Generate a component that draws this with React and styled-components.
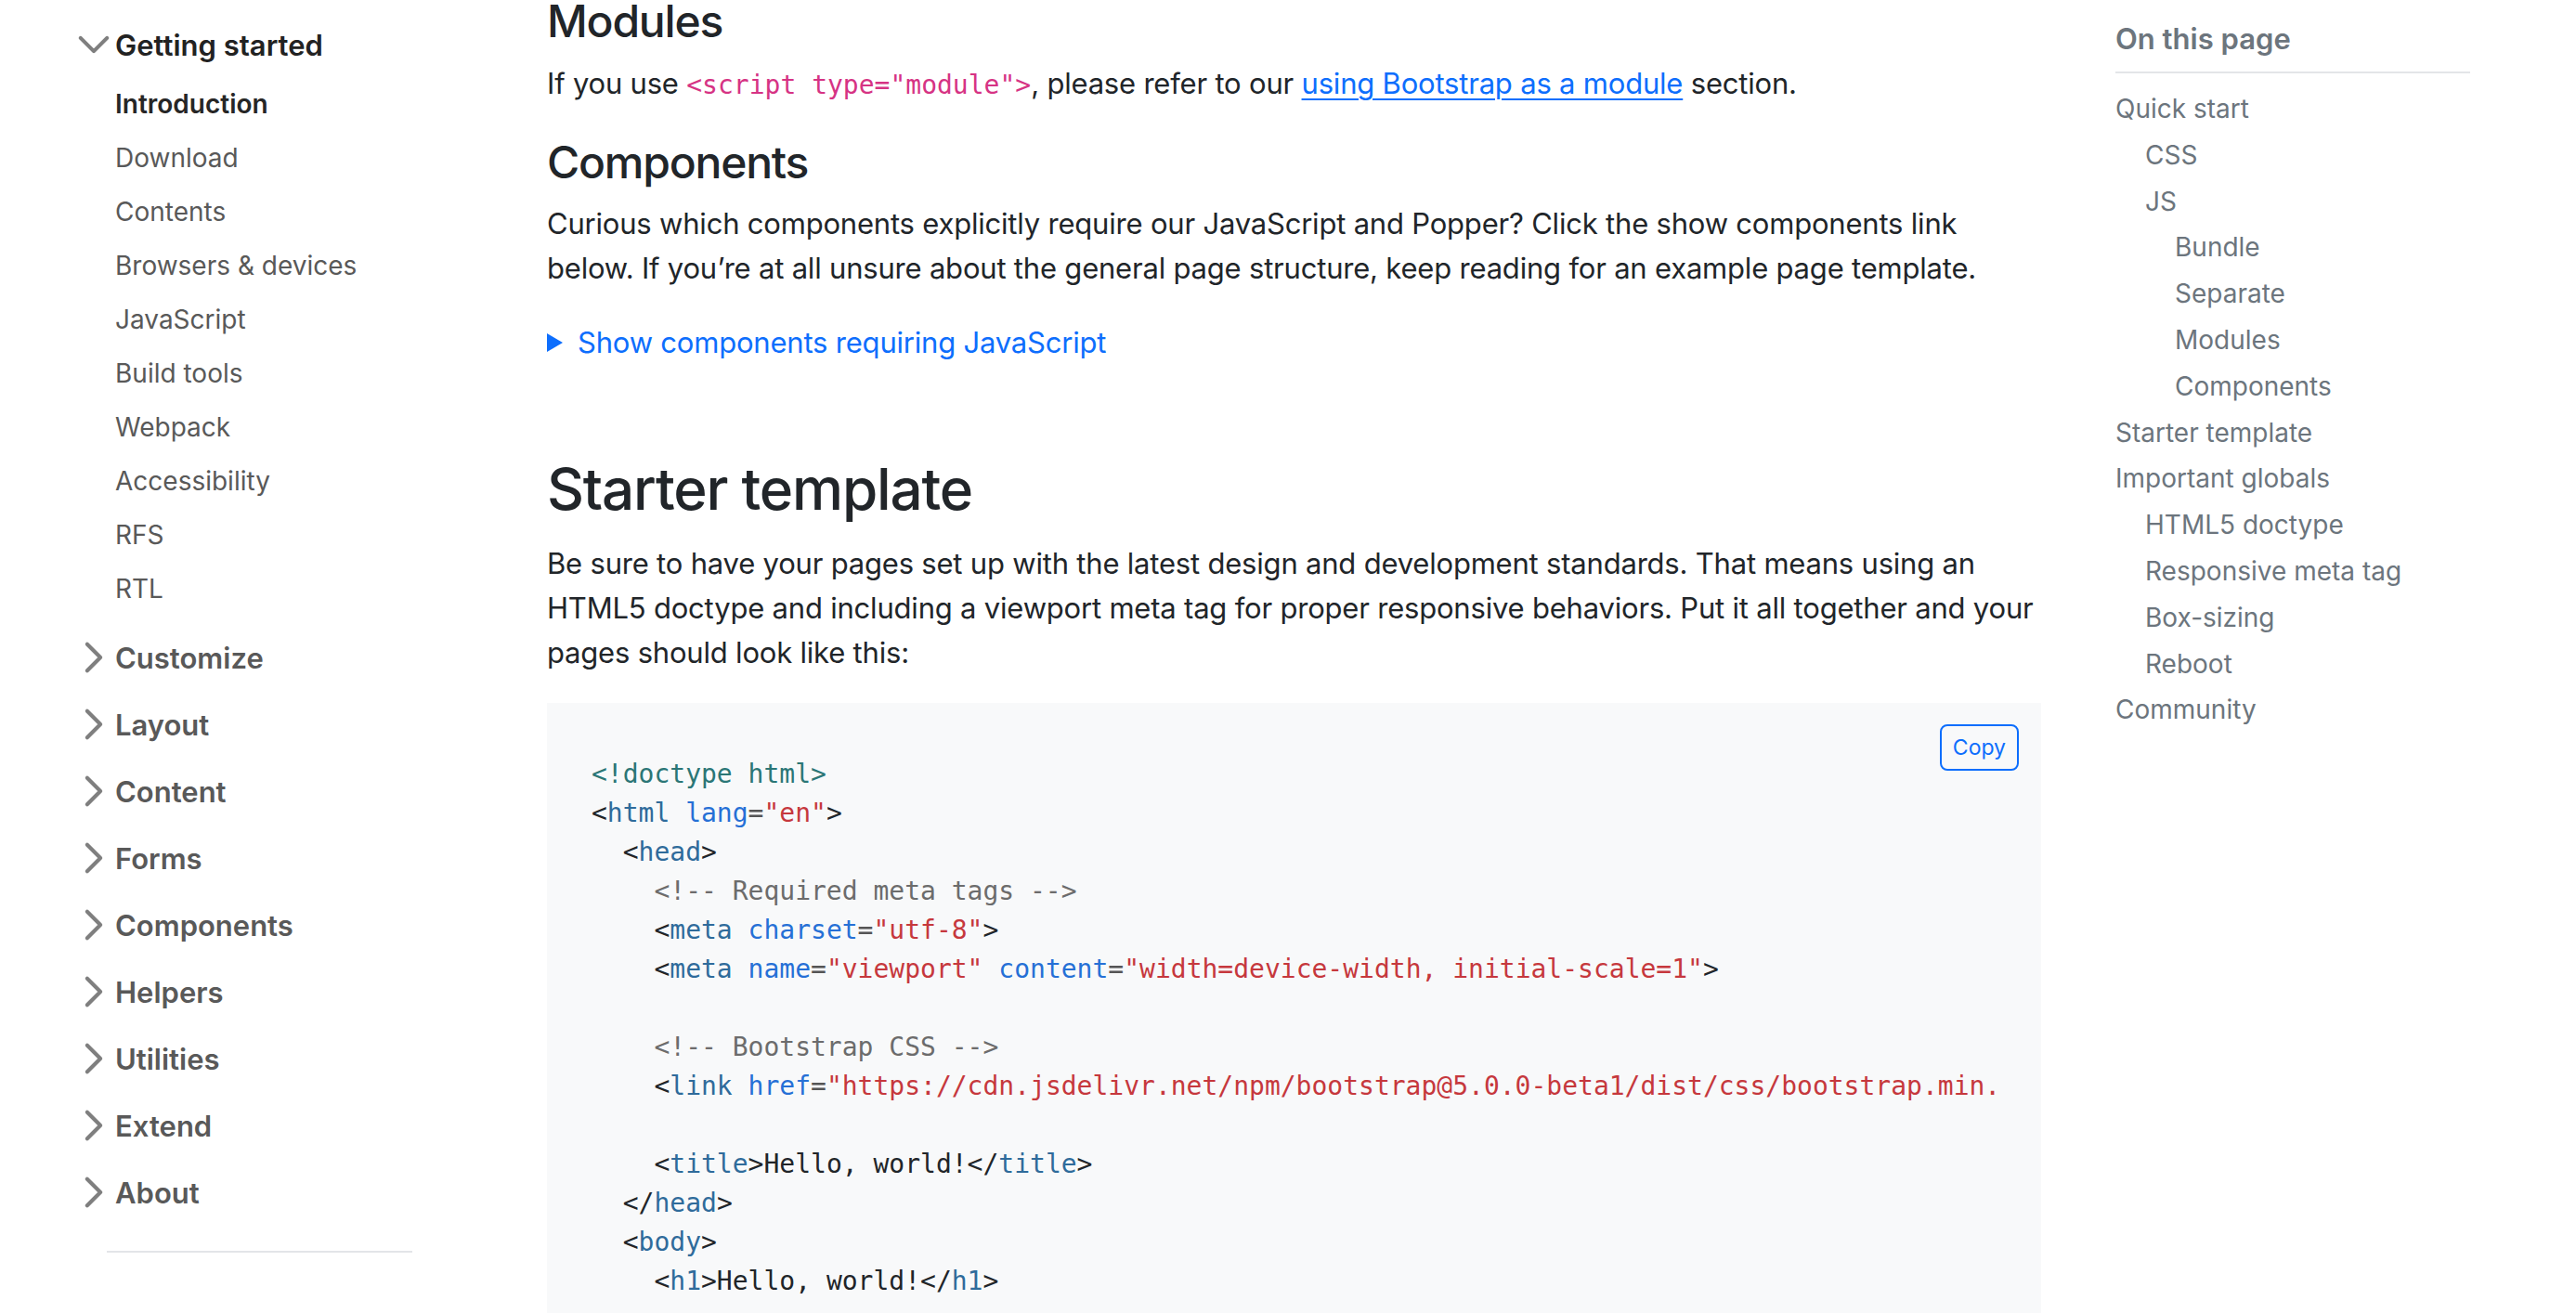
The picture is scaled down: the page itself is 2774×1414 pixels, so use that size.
import React from "react";
import styled, { createGlobalStyle } from "styled-components";

const GlobalStyle = createGlobalStyle`
  html, body {
    margin: 0;
    padding: 0;
    background: #ffffff;
  }
  body {
    font-family: Inter, "Liberation Sans", sans-serif;
    color: #212529;
    -webkit-font-smoothing: antialiased;
  }
  * {
    box-sizing: border-box;
  }
`;

const Layout = styled.div`
  display: flex;
  align-items: flex-start;
  width: 2774px;
`;

/* ---------- left sidebar ---------- */

const Sidebar = styled.nav`
  flex: 0 0 589px;
  padding: 17px 0 0 82px;
`;

const GroupList = styled.ul`
  list-style: none;
  margin: 0;
  padding: 0;
`;

const Group = styled.li`
  margin-bottom: 10px;
`;

const GroupButton = styled.div`
  display: flex;
  align-items: center;
  gap: 4px;
  height: 62px;
  font-size: 31px;
  font-weight: 600;
  color: ${(p) => (p.open ? "#222222" : "#595959")};
`;

const Chevron = styled.svg`
  flex: 0 0 38px;
  width: 38px;
  height: 38px;
  transform: rotate(${(p) => (p.open ? "90deg" : "0deg")});
`;

const SubList = styled.ul`
  list-style: none;
  margin: 0;
  padding: 2px 0 6px 42px;
`;

const SubItem = styled.li`
  margin-top: 4px;
  padding: 6px 0;
  font-size: 28px;
  line-height: 42px;
  font-weight: ${(p) => (p.active ? 600 : 400)};
  color: ${(p) => (p.active ? "#262626" : "#595959")};
`;

const Separator = styled.li`
  margin: 32px 0 0 33px;
  width: 329px;
  border-top: 2px solid #e3e5e8;
`;

/* ---------- main content ---------- */

const Main = styled.main`
  flex: 0 0 1609px;
  width: 1609px;
  min-width: 0;
`;

const H3 = styled.h3`
  margin: ${(p) => (p.first ? "-6px" : "30px")} 0 14px;
  font-size: 48px;
  line-height: 1.2;
  font-weight: 500;
  letter-spacing: -1.2px;
  color: #212529;
`;

const H2 = styled.h2`
  margin: 97px 0 18px;
  font-size: 62px;
  line-height: 1.2;
  font-weight: 500;
  letter-spacing: -1.2px;
  color: #212529;
`;

const Para = styled.p`
  margin: 0;
  font-size: 31px;
  line-height: 48px;
  letter-spacing: -0.2px;
  color: #212529;
`;

const InlineCode = styled.code`
  font-family: "DejaVu Sans Mono", "Liberation Mono", monospace;
  font-size: 28px;
  letter-spacing: 0;
  color: #d63384;
`;

const Link = styled.a`
  color: #0d6efd;
  text-decoration: underline;
  text-underline-offset: 5px;
  text-decoration-thickness: 2px;
`;

const Summary = styled.div`
  display: flex;
  align-items: center;
  gap: 16px;
  margin-top: 32px;
  font-size: 31px;
  line-height: 48px;
  letter-spacing: -0.2px;
  color: #0d6efd;
`;

const Marker = styled.span`
  width: 0;
  height: 0;
  border-left: 17px solid #0d6efd;
  border-top: 10px solid transparent;
  border-bottom: 10px solid transparent;
`;

const CodeBlock = styled.div`
  position: relative;
  margin-top: 30px;
  padding: 48px;
  background: #f8f9fa;
`;

const CopyButton = styled.button`
  position: absolute;
  top: 23px;
  right: 24px;
  padding: 5px 12px;
  font-family: Inter, "Liberation Sans", sans-serif;
  font-size: 23px;
  line-height: 36px;
  color: #0d6efd;
  background: transparent;
  border: 2px solid #0d6efd;
  border-radius: 8px;
`;

const Pre = styled.pre`
  margin: 8px 0 0;
  overflow: hidden;
  font-family: "DejaVu Sans Mono", "Liberation Mono", monospace;
  font-size: 28px;
  line-height: 42px;
  color: #212529;
`;

const Tok = styled.span`
  color: ${(p) =>
    ({
      doc: "#2b7676",
      tag: "#2f6b9b",
      attr: "#2670d6",
      str: "#c6383d",
      com: "#6c6c6c",
      eq: "#555555",
      txt: "#212529",
    })[p.k]};
`;

/* ---------- right toc ---------- */

const Toc = styled.aside`
  flex: 0 0 382px;
  margin-left: 80px;
  padding-top: 19px;
`;

const TocTitle = styled.div`
  padding-bottom: 12px;
  border-bottom: 2px solid #e3e5e8;
  font-size: 31px;
  line-height: 46px;
  font-weight: 600;
  color: #6c757d;
`;

const TocList = styled.ul`
  list-style: none;
  margin: 14px 0 0;
  padding: 0;
`;

const TocItem = styled.li`
  padding-left: ${(p) => p.level * 32}px;
  font-size: 28px;
  line-height: 49.8px;
  color: #6c757d;
`;

function ChevronIcon({ open }) {
  return (
    <Chevron open={open} viewBox="0 0 16 16" fill="none">
      <path
        d="M5 14l6-6-6-6"
        stroke="rgba(0,0,0,0.5)"
        strokeWidth="1.75"
        strokeLinecap="round"
        strokeLinejoin="round"
      />
    </Chevron>
  );
}

const subItems = [
  "Introduction",
  "Download",
  "Contents",
  "Browsers & devices",
  "JavaScript",
  "Build tools",
  "Webpack",
  "Accessibility",
  "RFS",
  "RTL",
];

const groups = [
  "Customize",
  "Layout",
  "Content",
  "Forms",
  "Components",
  "Helpers",
  "Utilities",
  "Extend",
  "About",
];

const toc = [
  ["Quick start", 0],
  ["CSS", 1],
  ["JS", 1],
  ["Bundle", 2],
  ["Separate", 2],
  ["Modules", 2],
  ["Components", 2],
  ["Starter template", 0],
  ["Important globals", 0],
  ["HTML5 doctype", 1],
  ["Responsive meta tag", 1],
  ["Box-sizing", 1],
  ["Reboot", 1],
  ["Community", 0],
];

// helpers for code lines
const open = (name) => [
  ["txt", "<"],
  ["tag", name],
];
const attr = (name, value) => [
  ["txt", " "],
  ["attr", name],
  ["eq", "="],
  ["str", `"${value}"`],
];

const codeLines = [
  [["doc", "<!doctype html>"]],
  [...open("html"), ...attr("lang", "en"), ["txt", ">"]],
  [["txt", "  "], ...open("head"), ["txt", ">"]],
  [["txt", "    "], ["com", "<!-- Required meta tags -->"]],
  [["txt", "    "], ...open("meta"), ...attr("charset", "utf-8"), ["txt", ">"]],
  [
    ["txt", "    "],
    ...open("meta"),
    ...attr("name", "viewport"),
    ...attr("content", "width=device-width, initial-scale=1"),
    ["txt", ">"],
  ],
  [],
  [["txt", "    "], ["com", "<!-- Bootstrap CSS -->"]],
  [
    ["txt", "    "],
    ...open("link"),
    ...attr(
      "href",
      "https://cdn.jsdelivr.net/npm/bootstrap@5.0.0-beta1/dist/css/bootstrap.min.css"
    ),
    ...attr("rel", "stylesheet"),
    ["txt", ">"],
  ],
  [],
  [
    ["txt", "    "],
    ...open("title"),
    ["txt", ">Hello, world!</"],
    ["tag", "title"],
    ["txt", ">"],
  ],
  [["txt", "  </"], ["tag", "head"], ["txt", ">"]],
  [["txt", "  "], ...open("body"), ["txt", ">"]],
  [
    ["txt", "    "],
    ...open("h1"),
    ["txt", ">Hello, world!</"],
    ["tag", "h1"],
    ["txt", ">"],
  ],
  [],
  [["txt", "    "], ["com", "<!-- Optional JavaScript; choose one of the two! -->"]],
];

export default function App() {
  return (
    <>
      <GlobalStyle />
      <Layout>
        <Sidebar>
          <GroupList>
            <Group>
              <GroupButton open>
                <ChevronIcon open />
                Getting started
              </GroupButton>
              <SubList>
                {subItems.map((s, i) => (
                  <SubItem key={s} active={i === 0}>
                    {s}
                  </SubItem>
                ))}
              </SubList>
            </Group>
            {groups.map((g) => (
              <Group key={g}>
                <GroupButton>
                  <ChevronIcon />
                  {g}
                </GroupButton>
              </Group>
            ))}
            <Separator />
          </GroupList>
        </Sidebar>

        <Main>
          <H3 first>Modules</H3>
          <Para>
            If you use <InlineCode>{'<script type="module">'}</InlineCode>, please refer to our{" "}
            <Link>using Bootstrap as a module</Link> section.
          </Para>

          <H3>Components</H3>
          <Para>
            Curious which components explicitly require our JavaScript and Popper? Click the show
            components link below. If you’re at all unsure about the general page structure, keep
            reading for an example page template.
          </Para>
          <Summary>
            <Marker />
            Show components requiring JavaScript
          </Summary>

          <H2>Starter template</H2>
          <Para>
            Be sure to have your pages set up with the latest design and development standards.
            That means using an HTML5 doctype and including a viewport meta tag for proper
            responsive behaviors. Put it all together and your pages should look like this:
          </Para>

          <CodeBlock>
            <CopyButton>Copy</CopyButton>
            <Pre>
              {codeLines.map((line, i) => (
                <div key={i}>
                  {line.length === 0
                    ? "\u00a0"
                    : line.map(([k, t], j) => (
                        <Tok key={j} k={k}>
                          {t}
                        </Tok>
                      ))}
                </div>
              ))}
            </Pre>
          </CodeBlock>
        </Main>

        <Toc>
          <TocTitle>On this page</TocTitle>
          <TocList>
            {toc.map(([label, level]) => (
              <TocItem key={label + level} level={level}>
                {label}
              </TocItem>
            ))}
          </TocList>
        </Toc>
      </Layout>
    </>
  );
}
